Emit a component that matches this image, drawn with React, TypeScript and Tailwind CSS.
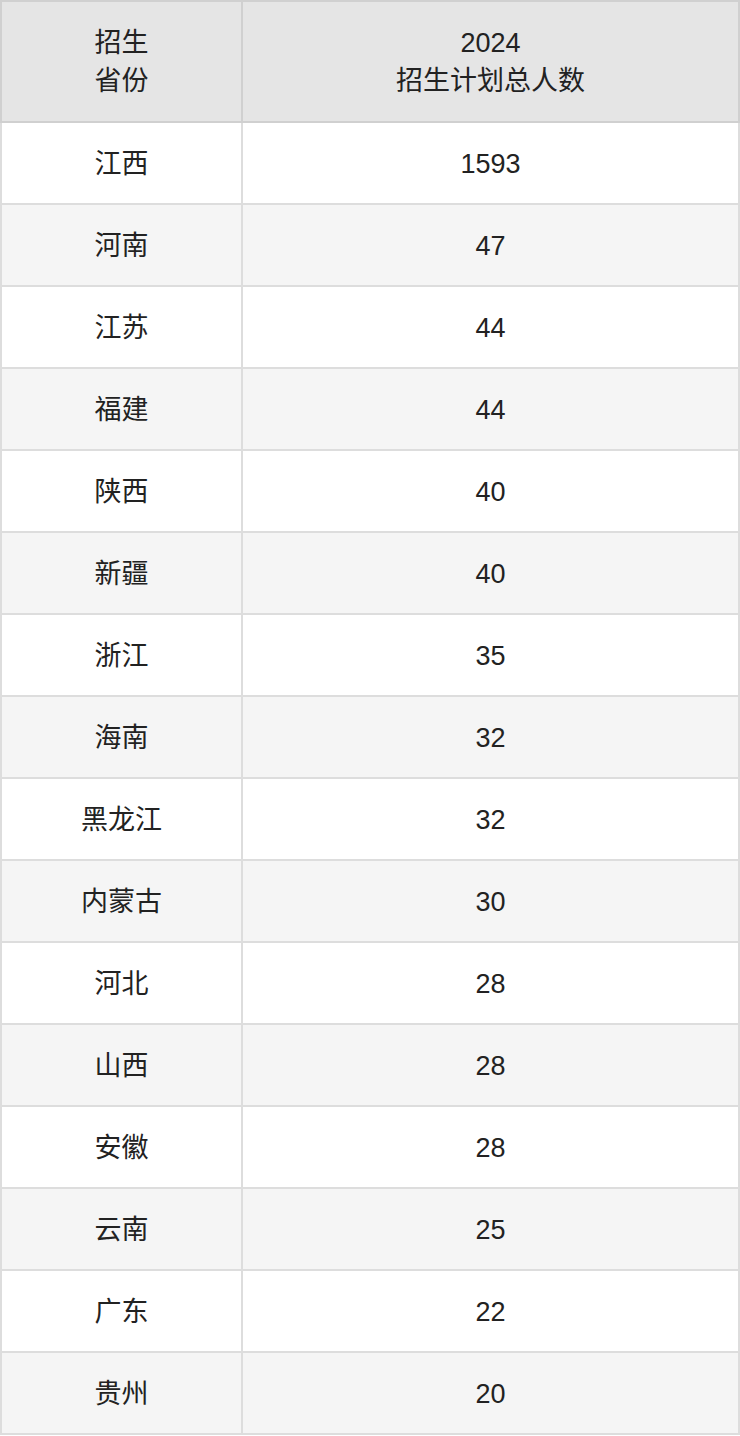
import React from "react";

const rows: [string, string][] = [
  ["江西", "1593"],
  ["河南", "47"],
  ["江苏", "44"],
  ["福建", "44"],
  ["陕西", "40"],
  ["新疆", "40"],
  ["浙江", "35"],
  ["海南", "32"],
  ["黑龙江", "32"],
  ["内蒙古", "30"],
  ["河北", "28"],
  ["山西", "28"],
  ["安徽", "28"],
  ["云南", "25"],
  ["广东", "22"],
  ["贵州", "20"],
];

export default function App() {
  return (
    <div
      className="w-[740px] bg-white text-[27px] text-[#222222]"
      style={{ fontFamily: '"Liberation Sans", "Noto Sans CJK SC", sans-serif' }}
    >
      <div className="grid grid-cols-[243px_497px]">
        <div className="h-[123px] flex flex-col items-center justify-center bg-[#e5e5e5] border-2 border-[#d0d0d0] leading-[38px]">
          <span>招生</span>
          <span>省份</span>
        </div>
        <div className="h-[123px] flex flex-col items-center justify-center bg-[#e5e5e5] border-2 border-l-0 border-[#d0d0d0] leading-[38px]">
          <span>2024</span>
          <span>招生计划总人数</span>
        </div>
        {rows.map(([p, n], i) => {
          const bg = i % 2 === 0 ? "bg-white" : "bg-[#f5f5f5]";
          return (
            <React.Fragment key={i}>
              <div
                className={`h-[82px] flex items-center justify-center pt-[2px] border-2 border-t-0 border-[#dddddd] ${bg}`}
              >
                {p}
              </div>
              <div
                className={`h-[82px] flex items-center justify-center pt-[2px] border-2 border-t-0 border-l-0 border-[#dddddd] ${bg}`}
              >
                {n}
              </div>
            </React.Fragment>
          );
        })}
      </div>
    </div>
  );
}
